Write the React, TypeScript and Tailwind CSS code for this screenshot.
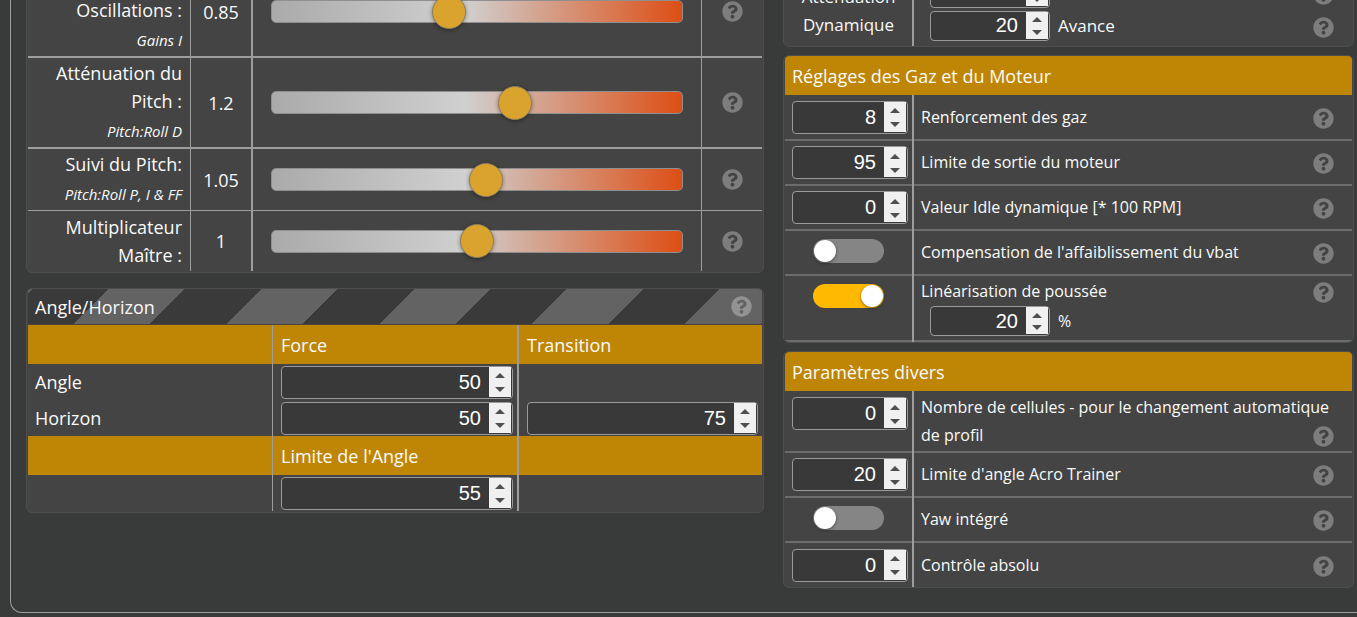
import React, { useState } from "react";
import { FaQuestionCircle } from "react-icons/fa";

interface NumberFieldProps {
  id: string;
  initial: number;
  label?: string;
  className?: string;
}

interface SliderRow {
  id: string;
  label: string;
  hint?: string;
  initial: number;
  border: string;
  height: string;
  align: string;
}

const sliderRows: SliderRow[] = [
  {
    id: "i-gain",
    label: "Oscillations :",
    hint: "Gains I",
    initial: 0.85,
    border: "border-b-2",
    height: "h-[91px]",
    align: "align-bottom",
  },
  {
    id: "pitch-d",
    label: "Atténuation du Pitch :",
    hint: "Pitch:Roll D",
    initial: 1.2,
    border: "border-b-2",
    height: "h-[91px]",
    align: "align-middle",
  },
  {
    id: "pitch-pi",
    label: "Suivi du Pitch:",
    hint: "Pitch:Roll P, I & FF",
    initial: 1.05,
    border: "border-b",
    height: "h-[62px]",
    align: "align-middle",
  },
  {
    id: "master",
    label: "Multiplicateur Maître :",
    initial: 1,
    border: "border-b-0",
    height: "h-[60px]",
    align: "align-middle",
  },
];

const Help = ({ className = "text-[#7c7d7c]" }: { className?: string }) => (
  <FaQuestionCircle
    aria-hidden="true"
    className={`size-[21px] shrink-0 ${className}`}
  />
);

const NumberField: React.FC<NumberFieldProps> = ({
  id,
  initial,
  label,
  className = "h-[33px] w-full",
}) => {
  const [value, setValue] = useState(initial);

  return (
    <div
      className={`flex rounded border border-[#9a9a9a] bg-[#393939] pr-px ${className}`}
    >
      <input
        id={id}
        type="number"
        aria-label={label}
        value={value}
        onChange={(e) => setValue(Number(e.target.value))}
        className="w-0 min-w-0 flex-1 appearance-none bg-transparent pr-2 text-right font-['Liberation_Sans',sans-serif] text-[20px] leading-none text-white outline-none [appearance:textfield] [&::-webkit-inner-spin-button]:appearance-none"
      />
      <div className="mb-px flex w-[22px] flex-col bg-[#f0f0f0]">
        <button
          type="button"
          tabIndex={-1}
          aria-label="Augmenter"
          onClick={() => setValue(value + 1)}
          className="flex flex-1 items-center justify-center pt-0.5"
        >
          <svg width="10" height="5" viewBox="0 0 10 5" fill="#4f4f4f">
            <path d="M0 5 5 0l5 5z" />
          </svg>
        </button>
        <button
          type="button"
          tabIndex={-1}
          aria-label="Diminuer"
          onClick={() => setValue(value - 1)}
          className="flex flex-1 items-center justify-center"
        >
          <svg width="10" height="5" viewBox="0 0 10 5" fill="#4f4f4f">
            <path d="M0 0h10L5 5z" />
          </svg>
        </button>
      </div>
    </div>
  );
};

const Toggle = ({ id, initial }: { id: string; initial: boolean }) => {
  const [on, setOn] = useState(initial);

  return (
    <input
      id={id}
      type="checkbox"
      role="switch"
      checked={on}
      onChange={() => setOn(!on)}
      className="mb-1 ml-[21px] flex h-6 w-[71px] appearance-none items-center rounded-full bg-[#858585] px-px before:size-[22px] before:rounded-full before:bg-white before:shadow-[0_1px_3px_rgba(0,0,0,0.5)] checked:justify-end checked:bg-[#ffb900]"
    />
  );
};

const TuningSlider = ({ row }: { row: SliderRow }) => {
  const [value, setValue] = useState(row.initial);
  const cell = `border-[#9c9d9c] p-0 ${row.border}`;

  return (
    <tr className={row.height}>
      <th
        scope="row"
        className={`${cell} ${row.align} border-r pr-2 pl-4 text-right font-normal`}
      >
        <label htmlFor={row.id} className="block leading-7">
          {row.label}
        </label>
        {row.hint && (
          <div className="text-[15px] leading-8 italic">{row.hint}</div>
        )}
      </th>
      <td className={`${cell} border-r-2 text-center`}>{value}</td>
      <td className={`${cell} border-r px-[18px]`}>
        <input
          id={row.id}
          type="range"
          min={0}
          max={2}
          step={0.05}
          value={value}
          onChange={(e) => setValue(Number(e.target.value))}
          className="block h-[23px] w-full appearance-none rounded-[5px] border border-[#8f8f8f] bg-[linear-gradient(90deg,#aaa,#d0d0d0_47%,#dd4e15)] [&::-webkit-slider-thumb]:size-[34px] [&::-webkit-slider-thumb]:appearance-none [&::-webkit-slider-thumb]:rounded-full [&::-webkit-slider-thumb]:border [&::-webkit-slider-thumb]:border-[#8f7f5a] [&::-webkit-slider-thumb]:bg-[#d9a32e] [&::-webkit-slider-thumb]:shadow-[0_1px_4px_rgba(0,0,0,0.4)]"
        />
      </td>
      <td className={`${cell} pl-5`}>
        <Help />
      </td>
    </tr>
  );
};

const Card = ({
  children,
  className = "",
}: {
  children: React.ReactNode;
  className?: string;
}) => (
  <section
    className={`overflow-hidden rounded-md border border-[#4d4e4d] bg-[#434443] px-px ${className}`}
  >
    {children}
  </section>
);

const CardTitle = ({ children }: { children: React.ReactNode }) => (
  <h2 className="flex h-[39px] items-center rounded-t bg-[#bf8605] px-[7px] pt-px">
    {children}
  </h2>
);

// One line of a settings card: control on the left, description on the right
const SettingRow = ({
  control,
  children,
  last,
  height = "min-h-[45px]",
  align = "items-center",
}: {
  control: React.ReactNode;
  children: React.ReactNode;
  last?: boolean;
  height?: string;
  align?: string;
}) => (
  <div
    className={`flex border-[#6b6c6b] ${height} ${last ? "" : "border-b-2"}`}
  >
    <div
      className={`-mb-0.5 flex w-[129px] shrink-0 border-r-2 border-[#9c9d9c] pr-1 pb-0.5 pl-[7px] ${align}`}
    >
      {control}
    </div>
    <div
      className={`flex flex-1 pr-2 pb-px pl-[7px] text-[16px] leading-7 ${align}`}
    >
      <div className="w-full">{children}</div>
    </div>
  </div>
);

const HelpFloat = () => (
  <Help className="float-right mt-[5px] mr-2.5 text-[#7c7d7c]" />
);

const App: React.FC = () => {
  const goldCell = "h-[39px] bg-[#bf8605] p-0 pl-2 text-left font-normal";
  const fieldCell = "h-9 p-0 pr-1 pl-2";

  return (
    <main className="flow-root min-h-screen overflow-hidden bg-[#393b3a] pb-1 font-['Open_Sans',sans-serif] text-[18px] leading-7 text-[#fafafa]">
      <div className="-mt-[34px] -mr-4 ml-2.5 grid grid-cols-[738fr_571fr] items-start gap-[19px] rounded-bl-xl border-b border-l border-[#9c9d9c] pr-[19px] pb-6 pl-[15px]">
        <div className="flex flex-col gap-[15px]">
          <Card className="pb-px">
            <table className="w-full table-fixed border-separate border-spacing-0">
              <colgroup>
                <col className="w-[163px]" />
                <col className="w-[62px]" />
                <col />
                <col className="w-[60px]" />
              </colgroup>
              <tbody>
                {sliderRows.map((row) => (
                  <TuningSlider key={row.id} row={row} />
                ))}
              </tbody>
            </table>
          </Card>

          <Card className="pb-px">
            <div className="flex h-9 items-center justify-between border-b border-[#4a4436] bg-[repeating-linear-gradient(135deg,#3a3a3a_3px,#3a3a3a_57px,#636363_57px,#636363_111px)] pr-2.5 pl-[7px]">
              <h2>Angle/Horizon</h2>
              <Help className="text-[#929292]" />
            </div>
            <table className="w-full table-fixed border-separate border-spacing-0">
              <colgroup>
                <col className="w-[245px]" />
                <col className="w-[246px]" />
                <col />
              </colgroup>
              <thead>
                <tr>
                  <td className={`${goldCell} border-r border-[#9c9d9c]`} />
                  <th className={`${goldCell} border-r-2 border-[#9c9d9c]`}>
                    Force
                  </th>
                  <th className={goldCell}>Transition</th>
                </tr>
              </thead>
              <tbody>
                <tr>
                  <td className="border-r border-[#9c9d9c] p-0 pl-[7px]">
                    <label htmlFor="angle-strength">Angle</label>
                  </td>
                  <td className={`${fieldCell} border-r-2 border-[#9c9d9c]`}>
                    <NumberField id="angle-strength" initial={50} />
                  </td>
                  <td />
                </tr>
                <tr>
                  <td className="border-r border-[#9c9d9c] p-0 pl-[7px]">
                    <label htmlFor="horizon-strength">Horizon</label>
                  </td>
                  <td className={`${fieldCell} border-r-2 border-[#9c9d9c]`}>
                    <NumberField id="horizon-strength" initial={50} />
                  </td>
                  <td className={fieldCell}>
                    <NumberField
                      id="horizon-transition"
                      label="Transition"
                      initial={75}
                    />
                  </td>
                </tr>
                <tr>
                  <td className={`${goldCell} border-r border-[#9c9d9c]`} />
                  <th className={`${goldCell} border-r-2 border-[#9c9d9c]`}>
                    <label htmlFor="angle-limit">Limite de l'Angle</label>
                  </th>
                  <td className={goldCell} />
                </tr>
                <tr>
                  <td className="border-r border-[#9c9d9c]" />
                  <td className={`${fieldCell} border-r-2 border-[#9c9d9c]`}>
                    <NumberField id="angle-limit" initial={55} />
                  </td>
                  <td />
                </tr>
              </tbody>
            </table>
          </Card>
        </div>

        <div className="flex flex-col gap-2">
          <Card>
            <div className="flex h-[79px] text-[17px]">
              <div className="flex w-[129px] flex-col justify-end border-r-2 border-[#9c9d9c] pb-[7px] text-center">
                <div>Atténuation</div>
                <div>Dynamique</div>
              </div>
              <div className="flex flex-1 flex-col justify-end pr-[18px] pb-1 pl-4">
                <div className="flex h-[33px] items-center">
                  <NumberField
                    id="dmin-gain"
                    label="Gain"
                    initial={37}
                    className="h-[30px] w-[120px]"
                  />
                  <Help className="mt-1 ml-auto text-[#7c7d7c]" />
                </div>
                <div className="flex h-[33px] items-center gap-2">
                  <NumberField
                    id="dmin-advance"
                    initial={20}
                    className="h-[30px] w-[120px]"
                  />
                  <label htmlFor="dmin-advance">Avance</label>
                  <Help className="mt-1 ml-auto text-[#7c7d7c]" />
                </div>
              </div>
            </div>
          </Card>

          <Card>
            <CardTitle>Réglages des Gaz et du Moteur</CardTitle>
            <SettingRow
              height="min-h-[46px]"
              control={<NumberField id="throttle-boost" initial={8} />}
            >
              <label htmlFor="throttle-boost">Renforcement des gaz</label>
              <HelpFloat />
            </SettingRow>
            <SettingRow
              control={<NumberField id="motor-limit" initial={95} />}
            >
              <label htmlFor="motor-limit">Limite de sortie du moteur</label>
              <HelpFloat />
            </SettingRow>
            <SettingRow control={<NumberField id="idle-rpm" initial={0} />}>
              <label htmlFor="idle-rpm">
                Valeur Idle dynamique [* 100 RPM]
              </label>
              <HelpFloat />
            </SettingRow>
            <SettingRow control={<Toggle id="vbat-comp" initial={false} />}>
              <label htmlFor="vbat-comp">
                Compensation de l'affaiblissement du vbat
              </label>
              <HelpFloat />
            </SettingRow>
            <SettingRow
              align="items-start pt-2"
              height="h-[66px]"
              control={<Toggle id="thrust-linear" initial={true} />}
            >
              <div className="-mt-[7px]">
                <label htmlFor="thrust-linear">Linéarisation de poussée</label>
                <HelpFloat />
                <div className="flex items-center gap-2 pt-px pl-[9px]">
                  <NumberField
                    id="thrust-percent"
                    initial={20}
                    className="h-[30px] w-[120px]"
                  />
                  <label htmlFor="thrust-percent">%</label>
                </div>
              </div>
            </SettingRow>
          </Card>

          <Card>
            <CardTitle>Paramètres divers</CardTitle>
            <SettingRow
              align="items-start pt-1.5"
              height="min-h-[62px]"
              control={<NumberField id="cell-count" initial={0} />}
            >
              <div className="-mt-1">
                <label htmlFor="cell-count">
                  Nombre de cellules - pour le changement automatique de profil
                </label>
                <HelpFloat />
              </div>
            </SettingRow>
            <SettingRow
              control={<NumberField id="acro-limit" initial={20} />}
            >
              <label htmlFor="acro-limit">Limite d'angle Acro Trainer</label>
              <HelpFloat />
            </SettingRow>
            <SettingRow control={<Toggle id="yaw" initial={false} />}>
              <label htmlFor="yaw">Yaw intégré</label>
              <HelpFloat />
            </SettingRow>
            <SettingRow
              last
              height="min-h-11"
              control={<NumberField id="abs-control" initial={0} />}
            >
              <label htmlFor="abs-control">Contrôle absolu</label>
              <HelpFloat />
            </SettingRow>
          </Card>
        </div>
      </div>
    </main>
  );
};

export default App;
